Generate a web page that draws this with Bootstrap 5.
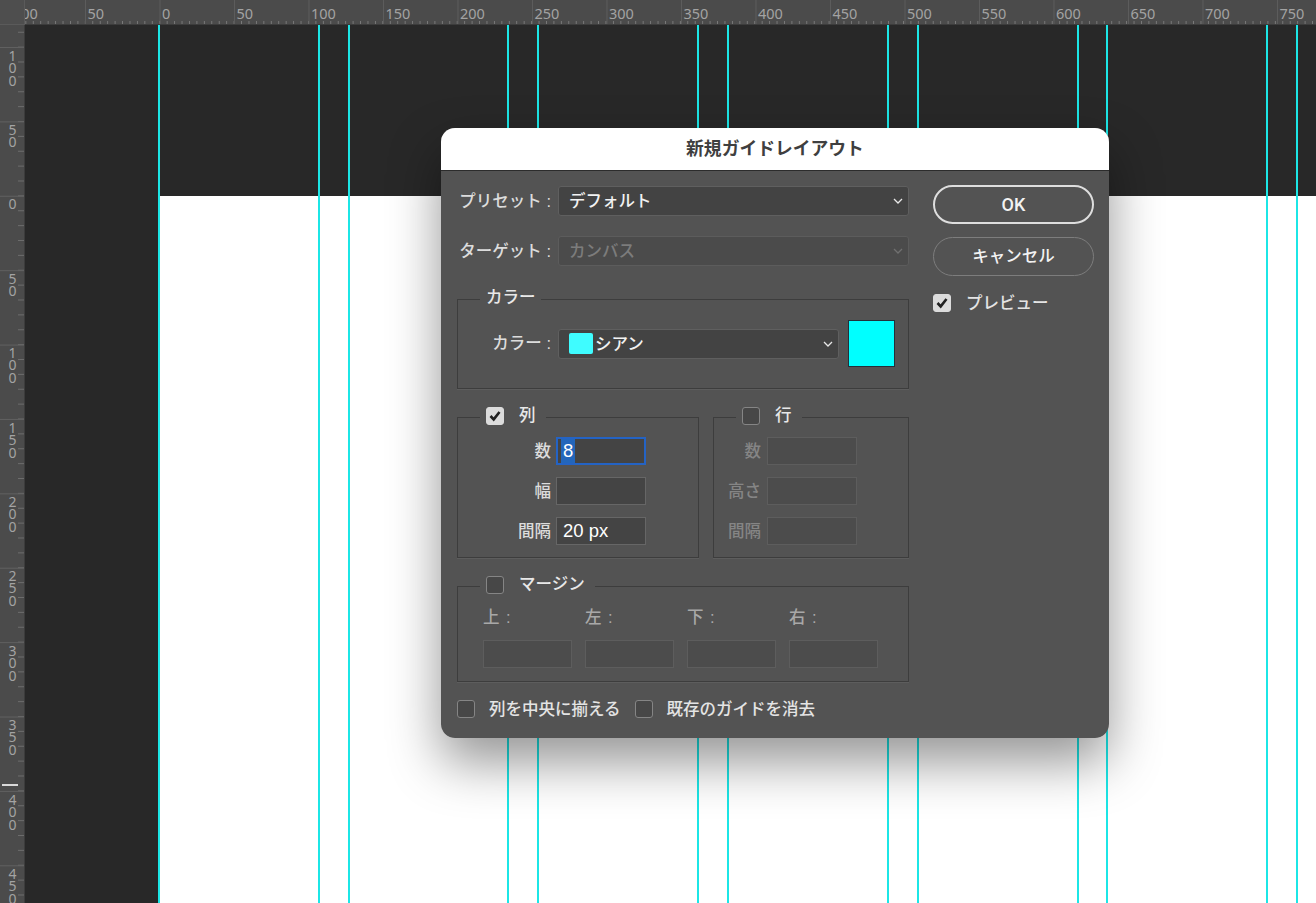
<!doctype html>
<html lang="ja">
<head>
    <meta charset="utf-8">
    <title>新規ガイドレイアウト</title>
    <meta name="viewport" content="width=device-width, initial-scale=1">
    <link href="https://cdn.jsdelivr.net/npm/bootstrap@5.3.0/dist/css/bootstrap.min.css" rel="stylesheet">
    <style>
        html, body { height: 100%; }
        body {
            background: #282828;
            overflow: hidden;
            font-family: "Liberation Sans", "Noto Sans CJK JP", sans-serif;
            font-size: 16.5px;
            font-weight: 500;
            color: #e4e4e4;
        }
        /* canvas */
        .app-stage { position: relative; width: 1316px; height: 903px; overflow: hidden; }
        .doc-page { position: absolute; left: 159px; top: 196px; right: 0; bottom: 0; background: #fff; }
        .guide-line { position: absolute; top: 25px; bottom: 0; width: 2px; background: #1ce6e6; }
        /* rulers */
        .ruler-top, .ruler-left { position: absolute; background-color: #4b4b4b; overflow: hidden; color: #a3a3a3; font-family: "Noto Sans", sans-serif; font-weight: 400; }
        .ruler-top {
            left: 0; top: 0; right: 0; height: 25px;
            background-image:
                linear-gradient(90deg, #5c5c5c 1px, transparent 1px),
                linear-gradient(90deg, #7a7a7a 1px, transparent 1px);
            background-size: 74.5px 100%, 7.45px 3px;
            background-position: 10.5px 0, 10.5px 100%;
            background-repeat: repeat-x;
            border-bottom: 1px solid #3c3c3c;
        }
        .ruler-left {
            left: 0; top: 0; bottom: 0; width: 25px;
            background-image:
                linear-gradient(#606060 1px, transparent 1px),
                linear-gradient(#6c6c6c 1px, transparent 1px);
            background-size: 100% 74.4px, 6px 14.88px;
            background-position: 0 47px, 100% 2px;
            background-repeat: repeat-y;
            border-right: 1px solid #3c3c3c;
        }
        .ruler-corner { position: absolute; left: 0; top: 0; width: 25px; height: 25px; background: #4e4e4e; border-right: 1px solid #5a5a5a; border-bottom: 1px solid #5a5a5a; }
        .top-num { position: absolute; top: 3px; font-size: 14.5px; line-height: 20px; }
        .left-num {
            position: absolute; left: 2px; width: 20px; font-size: 14px; line-height: 20px;
            writing-mode: vertical-rl; text-orientation: upright; letter-spacing: -6.6px;
        }
        .ruler-mark { position: absolute; left: 2px; top: 784px; width: 16px; height: 2px; background: #d8d8d8; }
        /* dialog */
        .guide-dialog {
            position: absolute; left: 441px; top: 128px; width: 668px; height: 610px;
            background: #535353; border-radius: 14px; overflow: hidden;
        }
        .dialog-shadow {
            position: absolute; left: 441px; top: 128px; width: 668px; height: 610px;
            border-radius: 14px; box-shadow: 0 24px 52px rgba(0,0,0,.42);
        }
        .dialog-title {
            height: 43px; background: #fff; color: #3f3f3f; border-bottom: 1px solid #2c2c2c;
            font-size: 17.8px; font-weight: 700; line-height: 43px; text-align: center;
        }
        .dialog-body { padding: 14px 15px 0 16px; gap: 24px; }
        .dialog-main { width: 452px; padding-top: 1px; }
        .dialog-side { width: 161px; }
        .field-label { width: 94px; margin-right: 7px; text-align: right; white-space: nowrap; flex: none; color: #dcdcdc; }
        .is-off, .is-off .field-label { color: #858585; }
        .row-next { margin-top: 20px; }
        .app-select.form-select {
            height: 30px; padding: 0 24px 0 10px; background-color: #434343; color: #f2f2f2;
            border: 1px solid #5f5f5f; border-radius: 3px; font-size: 16.5px; font-weight: 500; line-height: 28px;
            background-image: url("data:image/svg+xml,%3csvg xmlns='http://www.w3.org/2000/svg' viewBox='0 0 10 6'%3e%3cpath fill='none' stroke='%23e8e8e8' stroke-width='1.3' d='M1 1l4 4 4-4'/%3e%3c/svg%3e");
            background-size: 10px 6px; background-position: right 5px center;
        }
        .app-select.form-select:disabled {
            background-color: #4b4b4b; color: #7c7c7c; border-color: #5c5c5c; opacity: 1;
            background-image: url("data:image/svg+xml,%3csvg xmlns='http://www.w3.org/2000/svg' viewBox='0 0 10 6'%3e%3cpath fill='none' stroke='%23707070' stroke-width='1.3' d='M1 1l4 4 4-4'/%3e%3c/svg%3e");
        }
        .color-pick { width: 281px; display: flex; align-items: center; padding-left: 10px; }
        .color-chip { width: 24px; height: 21px; background: #3ffcff; border-radius: 2px; margin-right: 2px; }
        .color-big { width: 47px; height: 47px; margin-left: 9px; background: #00ffff; border: 1px solid #22303a; }
        /* group boxes */
        .group-box { border: 1px solid #3d3d3d; margin: 0; padding: 0; min-width: 0; box-shadow: 0 1px 0 #5d5d5d; }
        .group-box > legend {
            float: none; width: auto; margin: 0 0 0 22px; padding: 0 10px 3px 6px;
            font-size: 16.5px; line-height: 21px; height: 24px; display: flex; align-items: center; color: #e8e8e8;
        }
        .box-color { margin-top: 21px; padding: 9px 0 21px; }
        .box-color > legend { padding-right: 5px; }
        .box-color .field-label { width: 93px; }
        .box-cols { margin-top: 16px; gap: 14px; }
        .box-col-a { width: 242px; padding: 8px 0 12px; }
        .box-col-b { width: 196px; padding: 8px 0 12px; }
        .box-margin { margin-top: 16px; padding: 10px 0 13px; }
        .margin-inner { padding-left: 25px; }
        .num-row { height: 28px; margin-bottom: 12px; }
        .num-row:last-child { margin-bottom: 0; }
        .box-col-a .field-label { width: 93px; margin-right: 5px; }
        .box-col-b .field-label { width: 47px; margin-right: 6px; }
        .num-box.form-control {
            width: 90px; height: 28px; padding: 0 6px; border-radius: 0; border: 1px solid #666;
            background: #444; color: #fff; font-size: 18.5px; font-weight: 400; line-height: 26px; min-height: 0;
        }
        .num-box.is-dim.form-control { background: #4c4c4c; border-color: #5d5d5d; }
        .num-box.is-focus.form-control { border: 2px solid #2463c4; padding: 0 3px; line-height: 24px; }
        .sel-text { background: #2366bb; color: #fff; display: inline-block; padding: 0 2px; }
        .margin-head { color: #a8a8a8; line-height: 18px; margin-bottom: 14px; width: 89px; letter-spacing: 1px; }
        .margin-gap { gap: 13px; }
        .margin-gap .num-box.form-control { width: 89px; }
        .box-check.form-check-input {
            width: 18px; height: 18px; margin: 0; flex: none; border-radius: 3px;
            background-color: #474747; border: 1px solid #858585;
        }
        .box-check.form-check-input:checked {
            background-color: #dcdcdc; border-color: #dcdcdc;
            background-image: url("data:image/svg+xml,%3csvg xmlns='http://www.w3.org/2000/svg' viewBox='0 0 18 18'%3e%3cpath fill='none' stroke='%23222' stroke-width='2.6' d='M4.5 9l3.2 3.4 5.8-7.4'/%3e%3c/svg%3e");
            background-size: 18px 18px;
        }
        legend .box-check.form-check-input { margin-right: 15px; }
        .foot-row { margin-top: 18px; height: 18px; }
        .foot-row .box-check { margin-right: 14px; }
        .foot-row span { margin-right: 14px; white-space: nowrap; }
        .pill-btn.btn {
            width: 161px; height: 39px; padding: 0; border-radius: 20px; background: transparent;
            color: #f2f2f2; font-size: 16.5px; font-weight: 500; line-height: 34px;
        }
        .pill-main.btn { border: 2px solid #dedede; font-family: Roboto, sans-serif; font-size: 18px; }
        .pill-alt.btn { border: 1px solid #7d7d7d; margin-top: 13px; line-height: 37px; }
        .preview-row { margin-top: 15px; }
        .preview-row .box-check { margin-right: 15px; }
    </style>
</head>
<body>
    <div class="app-stage">
        <div class="doc-page"></div>
        <div id="guides"></div>
        <div class="ruler-top" id="rulerTop"></div>
        <div class="ruler-left" id="rulerLeft"><div class="ruler-mark"></div></div>
        <div class="ruler-corner"></div>

        <div class="dialog-shadow"></div>
        <div class="guide-dialog">
            <div class="dialog-title">新規ガイドレイアウト</div>
            <div class="dialog-body d-flex">
                <div class="dialog-main">
                    <div class="d-flex align-items-center">
                        <label class="field-label">プリセット :</label>
                        <select class="form-select app-select"><option>デフォルト</option></select>
                    </div>
                    <div class="d-flex align-items-center row-next">
                        <label class="field-label">ターゲット :</label>
                        <select class="form-select app-select" disabled><option>カンバス</option></select>
                    </div>

                    <fieldset class="group-box box-color">
                        <legend>カラー</legend>
                        <div class="d-flex align-items-center">
                            <label class="field-label">カラー :</label>
                            <div class="form-select app-select color-pick"><span class="color-chip"></span>シアン</div>
                            <div class="color-big"></div>
                        </div>
                    </fieldset>

                    <div class="d-flex box-cols">
                        <fieldset class="group-box box-col-a">
                            <legend><input class="form-check-input box-check" type="checkbox" checked>列</legend>
                            <div class="d-flex align-items-center num-row">
                                <label class="field-label">数</label>
                                <div class="form-control num-box is-focus"><span class="sel-text">8</span></div>
                            </div>
                            <div class="d-flex align-items-center num-row">
                                <label class="field-label">幅</label>
                                <div class="form-control num-box"></div>
                            </div>
                            <div class="d-flex align-items-center num-row">
                                <label class="field-label">間隔</label>
                                <div class="form-control num-box">20 px</div>
                            </div>
                        </fieldset>
                        <fieldset class="group-box box-col-b">
                            <legend><input class="form-check-input box-check" type="checkbox">行</legend>
                            <div class="d-flex align-items-center num-row is-off">
                                <label class="field-label">数</label>
                                <div class="form-control num-box is-dim"></div>
                            </div>
                            <div class="d-flex align-items-center num-row is-off">
                                <label class="field-label">高さ</label>
                                <div class="form-control num-box is-dim"></div>
                            </div>
                            <div class="d-flex align-items-center num-row is-off">
                                <label class="field-label">間隔</label>
                                <div class="form-control num-box is-dim"></div>
                            </div>
                        </fieldset>
                    </div>

                    <fieldset class="group-box box-margin">
                        <legend><input class="form-check-input box-check" type="checkbox">マージン</legend>
                        <div class="margin-inner">
                            <div class="d-flex margin-gap">
                                <div class="margin-head">上 :</div>
                                <div class="margin-head">左 :</div>
                                <div class="margin-head">下 :</div>
                                <div class="margin-head">右 :</div>
                            </div>
                            <div class="d-flex margin-gap">
                                <div class="form-control num-box is-dim"></div>
                                <div class="form-control num-box is-dim"></div>
                                <div class="form-control num-box is-dim"></div>
                                <div class="form-control num-box is-dim"></div>
                            </div>
                        </div>
                    </fieldset>

                    <div class="d-flex align-items-center foot-row">
                        <input class="form-check-input box-check" type="checkbox"><span>列を中央に揃える</span>
                        <input class="form-check-input box-check" type="checkbox"><span>既存のガイドを消去</span>
                    </div>
                </div>

                <div class="dialog-side">
                    <button type="button" class="btn pill-btn pill-main d-block">OK</button>
                    <button type="button" class="btn pill-btn pill-alt d-block">キャンセル</button>
                    <div class="d-flex align-items-center preview-row">
                        <input class="form-check-input box-check" type="checkbox" checked><span>プレビュー</span>
                    </div>
                </div>
            </div>
        </div>
    </div>

    <script src="https://cdn.jsdelivr.net/npm/bootstrap@5.3.0/dist/js/bootstrap.bundle.min.js"></script>
    <script>
    document.addEventListener("DOMContentLoaded", function() {
        // guide positions
        var guides = [159, 319, 349, 508, 538, 698, 728, 888, 918, 1078, 1107, 1267, 1297];
        var holder = document.getElementById("guides");
        guides.forEach(function(x) {
            var g = document.createElement("div");
            g.className = "guide-line";
            g.style.left = (x - 1) + "px";
            holder.appendChild(g);
        });

        // top ruler numbers
        var top = document.getElementById("rulerTop");
        [100, 50, 0, 50, 100, 150, 200, 250, 300, 350, 400, 450, 500, 550, 600, 650, 700, 750].forEach(function(n, i) {
            var s = document.createElement("span");
            s.className = "top-num";
            s.textContent = n;
            s.style.left = (13 + i * 74.5) + "px";
            top.appendChild(s);
        });

        // left ruler numbers, read downwards
        var left = document.getElementById("rulerLeft");
        [100, 50, 0, 50, 100, 150, 200, 250, 300, 350, 400, 450].forEach(function(n, i) {
            var d = document.createElement("div");
            d.className = "left-num";
            d.style.top = (45.5 + i * 74.4) + "px";
            d.textContent = n;
            left.appendChild(d);
        });
    });
    </script>
</body>
</html>
